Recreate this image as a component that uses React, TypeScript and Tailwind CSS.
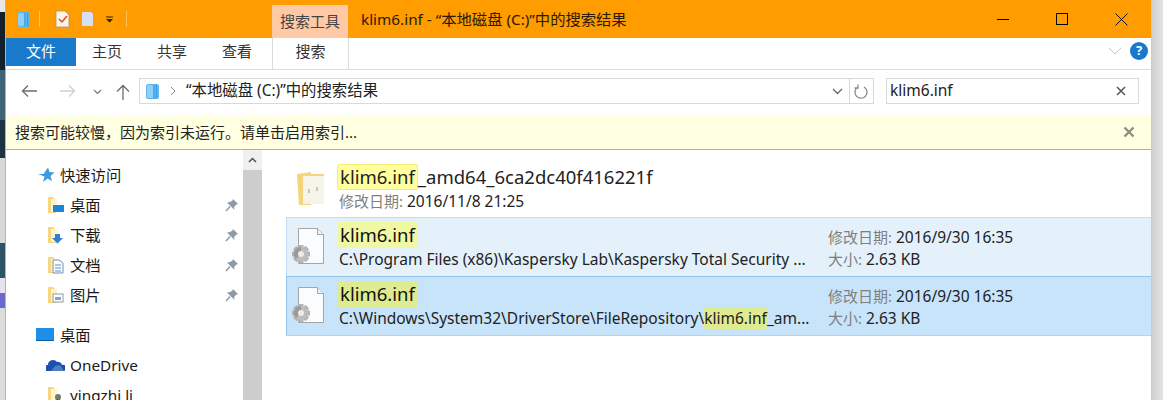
const font = { fontFamily: '"Noto Sans", "Noto Sans CJK SC", sans-serif' }

const Hl = ({ children, className = "" }: { children: string; className?: string }) => (
  <span className={`inline-block rounded-[3px] ${className}`}>{children}</span>
)

const FolderBase = ({ children }: { children?: React.ReactNode }) => (
  <svg width="17" height="18" viewBox="0 0 17 18" className="shrink-0">
    <path d="M1 1h5l3 3v13H1z" fill="#f6d77f" />
    <path d="M4 3h6v13H4z" fill="#fff3cc" />
    {children}
  </svg>
)

const Pin = () => (
  <svg width="14" height="14" viewBox="0 0 14 14">
    <path d="M8 1l5 5-1.500.5L9 9l.5 3L2 4.500l3-.5 2.500-1.500z" fill="#8e9aa6" />
    <path d="M5 8.500L1 13" stroke="#8e9aa6" strokeWidth="1.500" fill="none" />
  </svg>
)

const Gear = () => (
  <g>
    {[0, 45, 90, 135].map((a) => (
      <rect key={a} x="7.500" y="19" width="5" height="18" fill="#b4b4b4" transform={`rotate(${a} 10 28)`} />
    ))}
    <circle cx="10" cy="28" r="7" fill="#bdbdbd" />
    <path d="M10 21a7 7 0 0 0-5 12l5-5z" fill="#9a9a9a" />
    <circle cx="10" cy="28" r="3" fill="#ececec" />
  </g>
)

const FileGear = () => (
  <svg width="36" height="40" viewBox="0 0 36 40" className="shrink-0">
    <path d="M7.500 2.500h19l6 6v29h-25z" fill="#fbfcfd" stroke="#a5a5a5" />
    <path d="M26.500 2.500v6h6" fill="#f0f0f0" stroke="#a5a5a5" />
    <Gear />
  </svg>
)

const NavItem = ({ label, icon, pinned, indent }: { label: string; icon: React.ReactNode; pinned?: boolean; indent: string }) => (
  <div className={`h-[30px] flex items-center text-[15.300px] text-[#1a1a1a] whitespace-nowrap ${indent}`}>
    {icon}
    <span>{label}</span>
    {pinned && <span className="ml-auto mr-[4px] flex"><Pin /></span>}
  </div>
)

const ResultRow = ({ path, selected }: { path: React.ReactNode; selected?: boolean }) => (
  <div className={`h-[59px] flex border-t border-l ${selected ? "bg-[#c8e4fb] border-[#94c3ea]" : "bg-[#e4f1fb] border-[#c3dcf1]"}`}>
    <div className="w-[50px] pl-[4px] pt-[8px] flex">
      <FileGear />
    </div>
    <div className="w-[491px] pt-[4px]">
      <div className="text-[18.500px] leading-[26px] h-[26px] text-[#111]">
        <Hl className={`px-[3px] ${selected ? "bg-[#dfeb8f]" : "bg-[#f1f8a4]"}`}>klim6.inf</Hl>
      </div>
      <div className="text-[15.500px] leading-[22px] ml-[2px] whitespace-nowrap text-[#222]">{path}</div>
    </div>
    <div className="text-[15.500px] leading-[22px] pt-[8px] text-[#222] whitespace-nowrap">
      <div><span className="text-[#7f7f7f] text-[15px]">修改日期: </span>2016/9/30 16:35</div>
      <div><span className="text-[#7f7f7f] text-[15px]">大小: </span>2.63 KB</div>
    </div>
  </div>
)

const DriveIcon = () => (
  <svg width="15" height="17" viewBox="0 0 15 17">
    <rect x="1" y="1" width="13" height="15" rx="2.500" fill="#5cb7ef" />
    <path d="M9 1.500v14M11.500 1.500v14" stroke="#3f9be0" />
    <rect x="2" y="2" width="6" height="13" rx="1.500" fill="#8fd0f7" />
  </svg>
)

export default function App() {
  return (
    <div className="w-[1163px] h-[400px] flex overflow-hidden bg-white" style={font}>
      {/* desktop peeking through on the left */}
      <div className="w-[5px] shrink-0 flex flex-col">
        <div className="h-[12px] bg-[#e8e8e8]" />
        <div className="h-[58px] bg-[#14202c]" />
        <div className="h-[50px] bg-[#3f6478]" />
        <div className="h-[38px] bg-[#1e3342]" />
        <div className="h-[85px] bg-[#d8d8d8]" />
        <div className="h-[35px] bg-[#2e5266]" />
        <div className="h-[15px] bg-[#e4e4ee]" />
        <div className="h-[15px] bg-[#6a6ad0]" />
        <div className="flex-1 bg-[#dcdcdc]" />
      </div>

      <div className="w-[1147px] shrink-0 flex flex-col border-l border-r border-l-[#f5a93a] border-r-[#f0c878]">
        {/* title bar */}
        <div className="h-[38px] bg-[#ff9c00] flex">
          <div className="w-[266px] flex items-center pl-[10px]">
            <DriveIcon />
            <div className="w-px h-[16px] bg-[#ffc05e] ml-[8px]" />
            <svg width="15" height="18" viewBox="0 0 15 18" className="ml-[15px]">
              <path d="M1 1h9l4 4v12H1z" fill="#fdf3e4" stroke="#a88f70" strokeWidth=".8" />
              <path d="M4 9l3 3 5-6" fill="none" stroke="#d3502a" strokeWidth="1.500" />
            </svg>
            <svg width="13" height="16" viewBox="0 0 13 16" className="ml-[11px]">
              <path d="M1 1h9l2 2v12H1z" fill="#d5def2" />
            </svg>
            <svg width="7" height="7" viewBox="0 0 7 7" className="ml-[12px]">
              <path d="M0 .500h7v1H0zM0 3h7L3.500 6.500z" fill="#222" />
            </svg>
            <div className="w-px h-[16px] bg-[#ffc05e] ml-[13px]" />
          </div>
          <div className="w-[76px] mt-[5px] bg-[#fec9a4] text-[15px] text-[#444] flex items-center justify-center">搜索工具</div>
          <div className="pl-[13px] text-[15.300px] leading-[38px] text-[#2a1a00] whitespace-nowrap">klim6.inf - “本地磁盘 (C:)”中的搜索结果</div>
          <div className="ml-auto flex items-center pr-[23px]">
            <div className="w-[12px] h-px bg-black" />
            <div className="w-[12px] h-[12px] border border-black ml-[47px]" />
            <svg width="13" height="13" viewBox="0 0 13 13" className="ml-[47px]">
              <path d="M.5.500l12 12M12.500.500l-12 12" stroke="#111" fill="none" />
            </svg>
          </div>
        </div>

        {/* ribbon tabs */}
        <div className="h-[32px] flex text-[15px] text-[#333] border-b border-[#dadbdc]">
          <div className="w-[70px] h-[28px] bg-[#1979ca] text-white flex items-center justify-center pb-[1px]">文件</div>
          <div className="w-[65px] h-[28px] flex items-center justify-center pb-[1px] pr-[3px]">主页</div>
          <div className="w-[65px] h-[28px] flex items-center justify-center pb-[1px] pr-[3px]">共享</div>
          <div className="w-[65px] h-[28px] flex items-center justify-center pb-[1px] pr-[3px]">查看</div>
          <div className="w-[77px] h-[31px] ml-[1px] flex items-center justify-center border-x border-[#dadbdc] pb-[4px]">搜索</div>
          <div className="ml-auto flex items-center pr-[3px] pb-[6px] gap-[8px]">
            <svg width="14" height="8" viewBox="0 0 14 8"><path d="M1 1l6 6 6-6" fill="none" stroke="#c4c4c4" /></svg>
            <div className="w-[18px] h-[18px] rounded-full bg-[#1878cc] text-white text-[13px] font-bold flex items-center justify-center">?</div>
          </div>
        </div>

        {/* address row */}
        <div className="h-[45px] flex pt-[8px]">
          <div className="w-[133px] flex items-start pt-[6px] pl-[15px]">
            <svg width="16" height="14" viewBox="0 0 16 14"><path d="M16 7H1.500M7 1.500L1.500 7 7 12.500" fill="none" stroke="#6d6d6d" strokeWidth="1.300" /></svg>
            <svg width="16" height="14" viewBox="0 0 16 14" className="ml-[23px]"><path d="M0 7h14.500M9 1.500L14.500 7 9 12.500" fill="none" stroke="#d0d0d0" strokeWidth="1.300" /></svg>
            <svg width="9" height="6" viewBox="0 0 9 6" className="ml-[17px] mt-[5px]"><path d="M1 1l3.500 3.500L8 1" fill="none" stroke="#777" strokeWidth="1.200" /></svg>
            <svg width="14" height="16" viewBox="0 0 14 16" className="ml-[14px]"><path d="M7 16V1.500M1 7.500l6-6 6 6" fill="none" stroke="#6d6d6d" strokeWidth="1.300" /></svg>
          </div>
          <div className="w-[735px] h-[26px] border border-[#d9d9d9] flex items-center pl-[5px] text-[15.400px] text-[#222]">
            <DriveIcon />
            <svg width="6" height="10" viewBox="0 0 6 10" className="ml-[10px]"><path d="M1 1l4 4-4 4" fill="none" stroke="#888" /></svg>
            <span className="ml-[10px] mb-[1px] whitespace-nowrap">“本地磁盘 (C:)”中的搜索结果</span>
            <svg width="11" height="7" viewBox="0 0 11 7" className="ml-auto mr-[6px]"><path d="M1 1l4.500 4.500L10 1" fill="none" stroke="#666" strokeWidth="1.300" /></svg>
            <div className="w-[24px] h-full border-l border-[#d9d9d9] flex items-center justify-center">
              <svg width="15" height="15" viewBox="0 0 15 15"><path d="M4 3a6 6 0 1 0 6 0M4 .500V4H.500" fill="none" stroke="#8a8a8a" strokeWidth="1.300" /></svg>
            </div>
          </div>
          <div className="w-[253px] h-[26px] ml-[12px] border border-[#d9d9d9] flex items-center pl-[3px] pr-[12px] text-[15.500px] text-[#222]">
            <span>klim6.inf</span>
            <svg width="10" height="10" viewBox="0 0 10 10" className="ml-auto"><path d="M1 1l8 8M9 1l-8 8" stroke="#555" strokeWidth="1.500" /></svg>
          </div>
        </div>

        {/* info bar */}
        <div className="h-[35px] bg-[#ffffe1] border-b border-[#b0b0a0] flex items-center pl-[9px] pr-[16px] text-[15px] text-[#222]">
          <span>搜索可能较慢，因为索引未运行。请单击启用索引...</span>
          <svg width="12" height="12" viewBox="0 0 12 12" className="ml-auto"><path d="M1.500 1.500l9 9M10.500 1.500l-9 9" stroke="#8e8e80" strokeWidth="2.400" /></svg>
        </div>

        <div className="flex-1 flex overflow-hidden">
          {/* nav pane */}
          <div className="w-[237px] shrink-0 pt-[10px]">
            <NavItem indent="pl-[32px]" label="快速访问" icon={
              <svg width="17" height="16" viewBox="0 0 17 16" className="mr-[5px]"><path d="M10 .500l1.500 4.500L16.500 5.500l-4 3.500 1.500 5-4.500-2.500L5 15l1.500-5.500L0 7h5.500z" fill="#3d9ae0" /></svg>
            } />
            <NavItem indent="pl-[41px]" pinned label="桌面" icon={
              <span className="mr-[6px] flex"><FolderBase><rect x="6" y="9" width="11" height="7" fill="#1a87d8" /></FolderBase></span>
            } />
            <NavItem indent="pl-[41px]" pinned label="下载" icon={
              <span className="mr-[6px] flex"><FolderBase><path d="M8 8h5v4h3l-5.500 5.500L5 12h3z" fill="#2f7fd0" /></FolderBase></span>
            } />
            <NavItem indent="pl-[41px]" pinned label="文档" icon={
              <span className="mr-[6px] flex"><FolderBase><path d="M6 4h6l4 3v10H6z" fill="#fff" stroke="#6f8fb0" /><path d="M8 9h6M8 12h6M8 15h6" stroke="#4f8fc8" /></FolderBase></span>
            } />
            <NavItem indent="pl-[41px]" pinned label="图片" icon={
              <span className="mr-[6px] flex"><FolderBase><rect x="6" y="8" width="10" height="8" fill="#fff" stroke="#8a9aaa" /><rect x="8" y="11" width="6" height="3" fill="#7fa8cc" /></FolderBase></span>
            } />
            <div className="h-[10px]" />
            <NavItem indent="pl-[30px]" label="桌面" icon={
              <svg width="18" height="14" viewBox="0 0 18 14" className="mr-[6px]"><rect width="18" height="13" fill="#1d8fe8" /><rect y="12" width="18" height="1" fill="#0d5fa8" /></svg>
            } />
            <NavItem indent="pl-[40px]" label="OneDrive" icon={
              <svg width="19" height="13" viewBox="0 0 19 13" className="mr-[5px]"><path d="M1 12a3 3 0 0 1 1-6 5 5 0 0 1 9-3 4 4 0 0 1 5 3 3 3 0 0 1 2 6z" fill="#1b4fb0" /><path d="M5 12l4-5 5-1 4 6z" fill="#fff" opacity=".25" /></svg>
            } />
            <NavItem indent="pl-[41px]" label="yingzhi li" icon={
              <span className="mr-[6px] flex"><FolderBase><circle cx="11" cy="11" r="3" fill="#6b7f6a" /><path d="M6 18a5 5 0 0 1 10 0z" fill="#3f6a6a" /></FolderBase></span>
            } />
          </div>

          {/* scrollbar */}
          <div className="w-[19px] shrink-0 bg-[#cdcdcd]">
            <div className="h-[20px] bg-[#f0f0f0] flex items-center justify-center">
              <svg width="9" height="6" viewBox="0 0 9 6"><path d="M1 5l3.500-3.500L8 5" fill="none" stroke="#505050" strokeWidth="1.500" /></svg>
            </div>
          </div>

          {/* results */}
          <div className="flex-1 pl-[24px] pt-[10px]">
            <div className="h-[57px] flex">
              <div className="w-[51px] pt-[11px] pl-[10px] flex">
                <svg width="30" height="36" viewBox="0 0 30 36">
                  <path d="M1 3l14-2v33H3z" fill="#f4d57c" />
                  <path d="M7 3h21v30H7z" fill="#f6f3e8" />
                  <path d="M7 3h21v2H7z" fill="#f4d57c" />
                  <path d="M12 18h2v4h-2zM20 16h2v4h-2z" fill="#c9c4b0" />
                </svg>
              </div>
              <div className="pt-[4px]">
                <div className="text-[18.500px] leading-[26px] h-[26px] text-[#222] whitespace-nowrap">
                  <Hl className="px-[3px] bg-[#ffff9e] shadow-[inset_0_0_0_1px_#f6ec70]">klim6.inf</Hl>_amd64_6ca2dc40f416221f
                </div>
                <div className="text-[15.500px] leading-[22px] ml-[2px] text-[#222] whitespace-nowrap">
                  <span className="text-[#7f7f7f] text-[15px]">修改日期: </span>2016/11/8 21:25
                </div>
              </div>
            </div>
            <ResultRow path={"C:\\Program Files (x86)\\Kaspersky Lab\\Kaspersky Total Security ..."} />
            <ResultRow
              selected
              path={<>C:\Windows\System32\DriverStore\FileRepository\<Hl className="bg-[#dfeb8f]">klim6.inf</Hl>_am...</>}
            />
            <div className="border-t border-[#b3d4ef]" />
          </div>
        </div>
      </div>

      {/* window shadow */}
      <div className="flex-1 bg-gradient-to-r from-[#d0d0d0] to-[#e4e4e4]" />
    </div>
  )
}
